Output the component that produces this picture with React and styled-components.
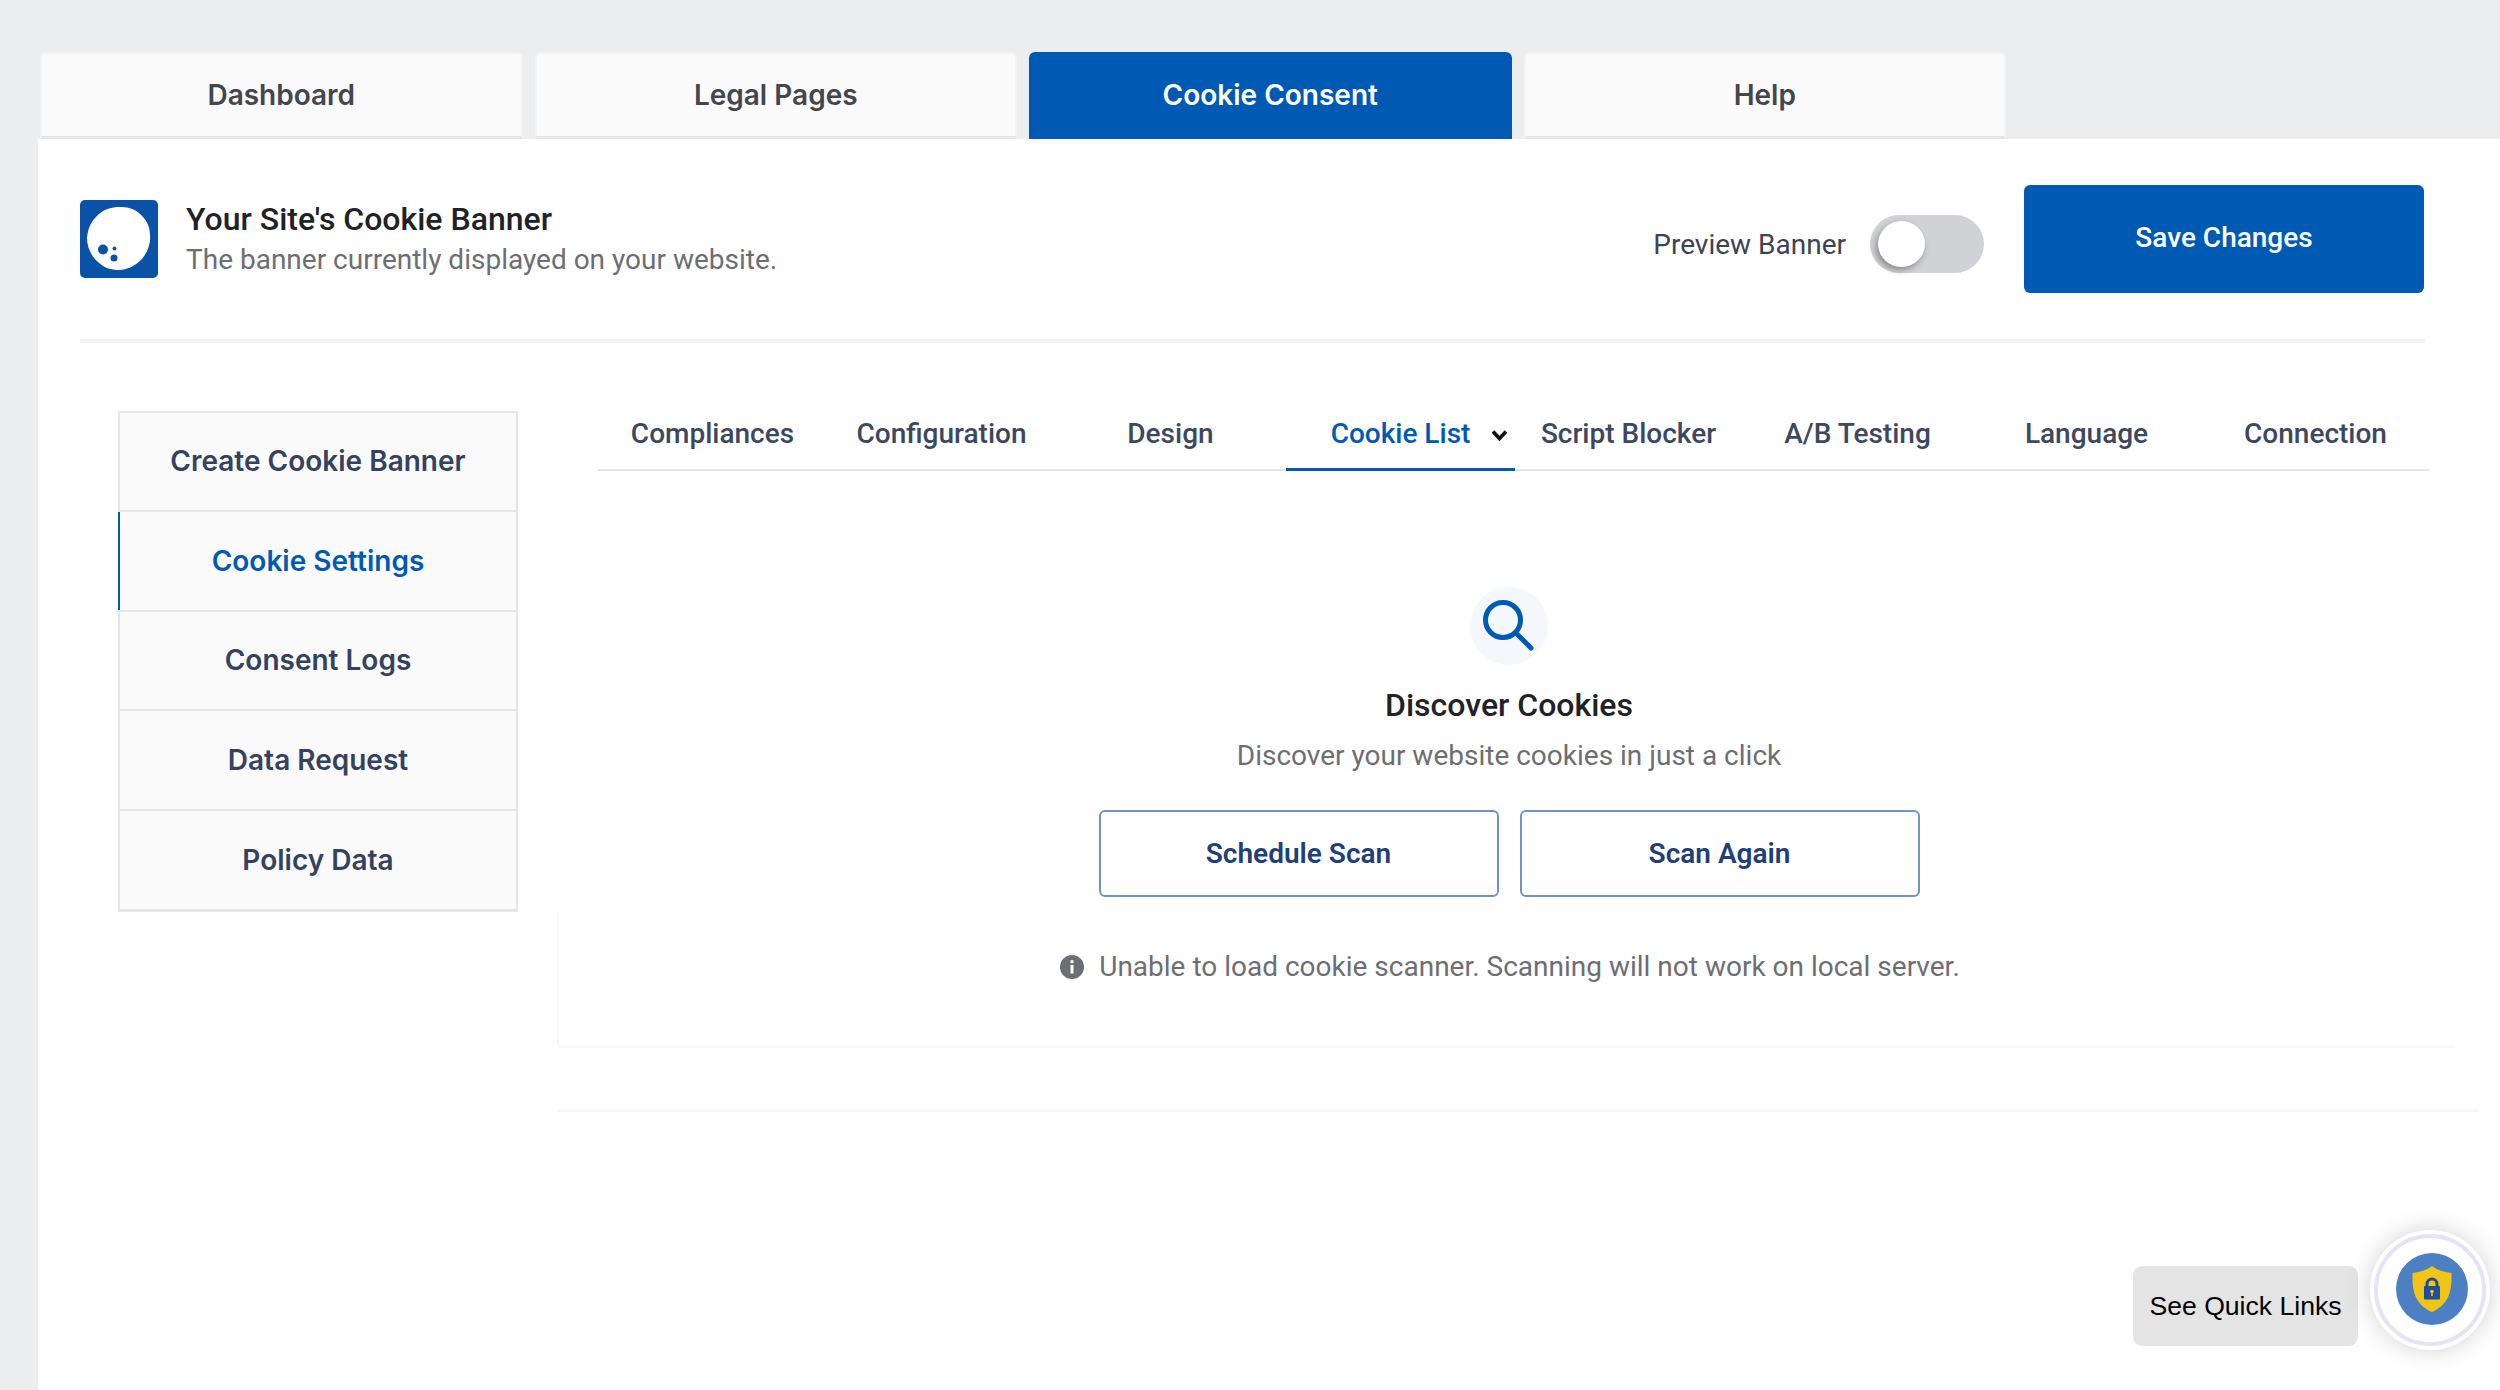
import React from 'react';
import styled, { createGlobalStyle } from 'styled-components';

const GlobalStyle = createGlobalStyle`
    html, body {
        margin: 0;
        padding: 0;
        background: #ebedef;
        font-family: Inter, "Liberation Sans", sans-serif;
    }
    * {
        box-sizing: border-box;
    }
`;

const Page = styled.div`
    position: relative;
    width: 2500px;
    height: 1390px;
    overflow: hidden;
    padding: 52px 0 0 38px;
`;

const TopTabs = styled.div`
    display: flex;
    gap: 12px;
    padding-left: 2px;
    height: 87px;
`;

const TopTab = styled.div`
    width: 482.5px;
    display: flex;
    align-items: center;
    justify-content: center;
    font-size: 28px;
    font-weight: 600;
    border-radius: 6px 6px 0 0;
    color: ${props => (props.$active ? '#ffffff' : '#43464d')};
    background: ${props => (props.$active ? '#005ab3' : '#fafafa')};
    border: 2px solid ${props => (props.$active ? '#005ab3' : '#f4f4f5')};
    border-bottom: 3px solid ${props => (props.$active ? '#005ab3' : '#e4e5e7')};
`;

const Panel = styled.div`
    background: #ffffff;
    height: 1251px;
`;

const Header = styled.div`
    display: flex;
    align-items: flex-start;
    justify-content: space-between;
    margin: 0 75px 0 42px;
    padding-top: 46px;
    height: 204px;
    border-bottom: 4px solid #f3f4f5;
`;

const Brand = styled.div`
    display: flex;
    gap: 28px;
    margin-top: 15px;
`;

const Logo = styled.svg`
    display: block;
    width: 78px;
    height: 78px;
`;

const BrandTitle = styled.div`
    font-family: Roboto, sans-serif;
    font-size: 32px;
    font-weight: 500;
    line-height: 40px;
    color: #202226;
    margin-top: -1px;
`;

const BrandText = styled.div`
    font-family: Roboto, sans-serif;
    font-size: 28px;
    line-height: 38px;
    margin-top: 2px;
    color: #6d6e73;
`;

const HeaderActions = styled.div`
    display: flex;
    align-items: flex-start;
    margin-right: 1px;
`;

const PreviewLabel = styled.span`
    font-family: Roboto, sans-serif;
    font-size: 28px;
    line-height: 34px;
    color: #3d4354;
    margin: 43px 24px 0 0;
`;

const Toggle = styled.div`
    width: 114px;
    height: 58px;
    margin: 30px 40px 0 0;
    padding: 6px 8px;
    border-radius: 29px;
    background: #d1d2d5;
`;

const ToggleKnob = styled.div`
    width: 47px;
    height: 46px;
    border-radius: 50%;
    background: #ffffff;
    box-shadow: -2px 3px 6px rgba(0, 0, 0, 0.35);
`;

const SaveButton = styled.button`
    width: 400px;
    height: 108px;
    border: 0;
    border-radius: 6px;
    background: #005ab3;
    color: #ffffff;
    font-family: Roboto, sans-serif;
    font-size: 28px;
    font-weight: 500;
    padding-bottom: 4px;
`;

const Body = styled.div`
    display: flex;
    align-items: flex-start;
    padding: 68px 0 0 80px;
`;

const SideNav = styled.div`
    width: 400px;
    flex: none;
    border: 2px solid #e5e6e8;
    border-bottom-width: 1px;
    background: #fafafb;
    margin-right: 39px;
`;

const SideItem = styled.div`
    position: relative;
    height: 99.75px;
    display: flex;
    align-items: center;
    justify-content: center;
    font-size: 28px;
    font-weight: 600;
    color: ${props => (props.$active ? '#005ab3' : '#344260')};
    border-bottom: 2px solid #e5e6e8;

    &:first-child {
        height: 98.8px;
    }

    ${props => props.$active && `
        &::before {
            content: '';
            position: absolute;
            left: -2px;
            top: 0;
            bottom: 0;
            width: 2px;
            background: #005ab3;
        }
    `}
`;

const Content = styled.div`
    width: 1898px;
`;

const SubTabs = styled.div`
    display: grid;
    grid-template-columns: repeat(8, 229px);
    margin-left: 41px;
    width: 1832px;
    height: 60px;
    border-bottom: 2px solid #e4e5e7;
`;

const SubTab = styled.div`
    position: relative;
    display: flex;
    justify-content: center;
    padding-top: 4px;
    height: 60px;
    font-family: Roboto, sans-serif;
    font-size: 28px;
    font-weight: 500;
    line-height: 38px;
    white-space: nowrap;
    color: ${props => (props.$active ? '#005ab3' : '#3c4860')};
    ${props => props.$active && 'border-bottom: 3px solid #005ab3; margin: 0 -1px 0 1px;'}
`;

const Chevron = styled.svg`
    position: absolute;
    right: 7px;
    top: 18px;
    width: 17px;
    height: 13px;
`;

const Discover = styled.div`
    display: flex;
    flex-direction: column;
    align-items: center;
    padding: 116px 0 0 6px;
    height: 441px;
`;

const SearchBadge = styled.div`
    width: 78px;
    height: 78px;
    border-radius: 50%;
    background: #f4f7fc;
    display: flex;
    align-items: center;
    justify-content: center;
`;

const DiscoverTitle = styled.div`
    margin-top: 20px;
    font-family: Roboto, sans-serif;
    font-size: 32px;
    font-weight: 500;
    line-height: 40px;
    color: #202226;
`;

const DiscoverText = styled.div`
    margin-top: 11px;
    font-family: Roboto, sans-serif;
    font-size: 28px;
    line-height: 40px;
    color: #6d6e73;
`;

const ScanButtons = styled.div`
    display: flex;
    gap: 21px;
    margin-top: 34px;
`;

const ScanButton = styled.button`
    width: 400px;
    height: 87px;
    border: 2px solid #6f93c4;
    border-radius: 6px;
    background: #ffffff;
    color: #1f3f78;
    font-family: Roboto, sans-serif;
    font-size: 28px;
    font-weight: 600;
`;

const Notice = styled.div`
    height: 136px;
    padding: 36px 0 0 6px;
    display: flex;
    justify-content: center;
    align-items: flex-start;
    gap: 15px;
    font-family: Roboto, sans-serif;
    font-size: 28px;
    line-height: 38px;
    color: #6d6e73;
    border-left: 2px solid #f8f8f8;
    border-bottom: 2px solid #f7f7f7;
    border-bottom-left-radius: 4px;
`;

const NoticeIcon = styled.svg`
    flex: none;
    width: 24px;
    height: 24px;
    margin-top: 7px;
`;

const EmptyStrip = styled.div`
    width: 1922px;
    height: 64px;
    background: #fefefe;
    border-bottom: 2px solid #f7f7f7;
`;

const QuickLinks = styled.div`
    position: absolute;
    left: 2133px;
    top: 1266px;
    width: 225px;
    height: 80px;
    display: flex;
    align-items: center;
    justify-content: center;
    border-radius: 9px;
    background: #e4e4e4;
    font-family: "Liberation Sans", sans-serif;
    font-size: 26.6px;
    color: #000000;
`;

const Widget = styled.div`
    position: absolute;
    left: 2370px;
    top: 1230px;
    width: 120px;
    height: 120px;
    border-radius: 50%;
    background: #ffffff;
    box-shadow: 0 0 24px rgba(0, 0, 0, 0.18);
    display: flex;
    align-items: center;
    justify-content: center;

    &::after {
        content: '';
        position: absolute;
        inset: 4px;
        border-radius: 50%;
        border: 4px solid #e5e3f5;
    }
`;

const WidgetIcon = styled.svg`
    width: 72px;
    height: 72px;
    margin: -2px 0 0 4px;
`;

const topTabs = ['Dashboard', 'Legal Pages', 'Cookie Consent', 'Help'];
const sideItems = ['Create Cookie Banner', 'Cookie Settings', 'Consent Logs', 'Data Request', 'Policy Data'];
const subTabs = ['Compliances', 'Configuration', 'Design', 'Cookie List', 'Script Blocker', 'A/B Testing', 'Language', 'Connection'];

export default function App() {
    return (
        <Page>
            <GlobalStyle />
            <TopTabs>
                {topTabs.map(tab => (
                    <TopTab key={tab} $active={tab === 'Cookie Consent'}>{tab}</TopTab>
                ))}
            </TopTabs>
            <Panel>
                <Header>
                    <Brand>
                        <Logo viewBox="0 0 78 78">
                            <rect width="78" height="78" rx="5" fill="#0a52a8" />
                            <path d="M39 7 C47 7 53 8 59 13 C65 18 70 25 70 35 C71 44 67 53 62 59 C55 66 47 70 39 70 C31 70 24 68 18 62 C11 56 7 47 7 38 C8 28 11 21 19 14 C25 9 32 7 39 7 Z" fill="#ffffff" />
                            <circle cx="23" cy="49.5" r="5" fill="#0a52a8" />
                            <circle cx="34" cy="58" r="3.5" fill="#0a52a8" />
                            <circle cx="34.5" cy="48.5" r="2" fill="#0a52a8" />
                        </Logo>
                        <div>
                            <BrandTitle>Your Site's Cookie Banner</BrandTitle>
                            <BrandText>The banner currently displayed on your website.</BrandText>
                        </div>
                    </Brand>
                    <HeaderActions>
                        <PreviewLabel>Preview Banner</PreviewLabel>
                        <Toggle>
                            <ToggleKnob />
                        </Toggle>
                        <SaveButton>Save Changes</SaveButton>
                    </HeaderActions>
                </Header>
                <Body>
                    <SideNav>
                        {sideItems.map(item => (
                            <SideItem key={item} $active={item === 'Cookie Settings'}>{item}</SideItem>
                        ))}
                    </SideNav>
                    <Content>
                        <SubTabs>
                            {subTabs.map(tab => (
                                <SubTab key={tab} $active={tab === 'Cookie List'}>
                                    {tab}
                                    {tab === 'Cookie List' && (
                                        <Chevron viewBox="0 0 17 13">
                                            <path d="M2 2.5 L8.5 9.5 L15 2.5" fill="none" stroke="#111111" strokeWidth="3.6" />
                                        </Chevron>
                                    )}
                                </SubTab>
                            ))}
                        </SubTabs>
                        <Discover>
                            <SearchBadge>
                                <svg width="78" height="78" viewBox="0 0 78 78">
                                    <circle cx="33" cy="33" r="17.5" fill="none" stroke="#005ab3" strokeWidth="5" />
                                    <path d="M46 46 L61 61" stroke="#005ab3" strokeWidth="5" strokeLinecap="round" />
                                </svg>
                            </SearchBadge>
                            <DiscoverTitle>Discover Cookies</DiscoverTitle>
                            <DiscoverText>Discover your website cookies in just a click</DiscoverText>
                            <ScanButtons>
                                <ScanButton>Schedule Scan</ScanButton>
                                <ScanButton>Scan Again</ScanButton>
                            </ScanButtons>
                        </Discover>
                        <Notice>
                            <NoticeIcon viewBox="0 0 24 24">
                                <circle cx="12" cy="12" r="12" fill="#6d6e73" />
                                <rect x="10.5" y="10" width="3" height="8.5" fill="#ffffff" />
                                <circle cx="12" cy="6.8" r="1.8" fill="#ffffff" />
                            </NoticeIcon>
                            Unable to load cookie scanner. Scanning will not work on local server.
                        </Notice>
                        <EmptyStrip />
                    </Content>
                </Body>
            </Panel>
            <QuickLinks>See Quick Links</QuickLinks>
            <Widget>
                <WidgetIcon viewBox="0 0 72 72">
                    <circle cx="36" cy="36" r="36" fill="#4d80c3" />
                    <path d="M36 13 C41 17 48 19 55.5 20 C56 36 54 51 36 59 C18 51 16 36 16.5 20 C24 19 31 17 36 13 Z" fill="#f1c417" />
                    <path d="M31 34 V31 A5 5 0 0 1 41 31 V34" fill="none" stroke="#1d4f9c" strokeWidth="3" />
                    <rect x="28" y="33" width="16" height="13.5" rx="1" fill="#1d4f9c" />
                    <circle cx="36" cy="38.5" r="1.8" fill="#f1c417" />
                    <rect x="35.2" y="39" width="1.6" height="4" fill="#f1c417" />
                </WidgetIcon>
            </Widget>
        </Page>
    );
}
